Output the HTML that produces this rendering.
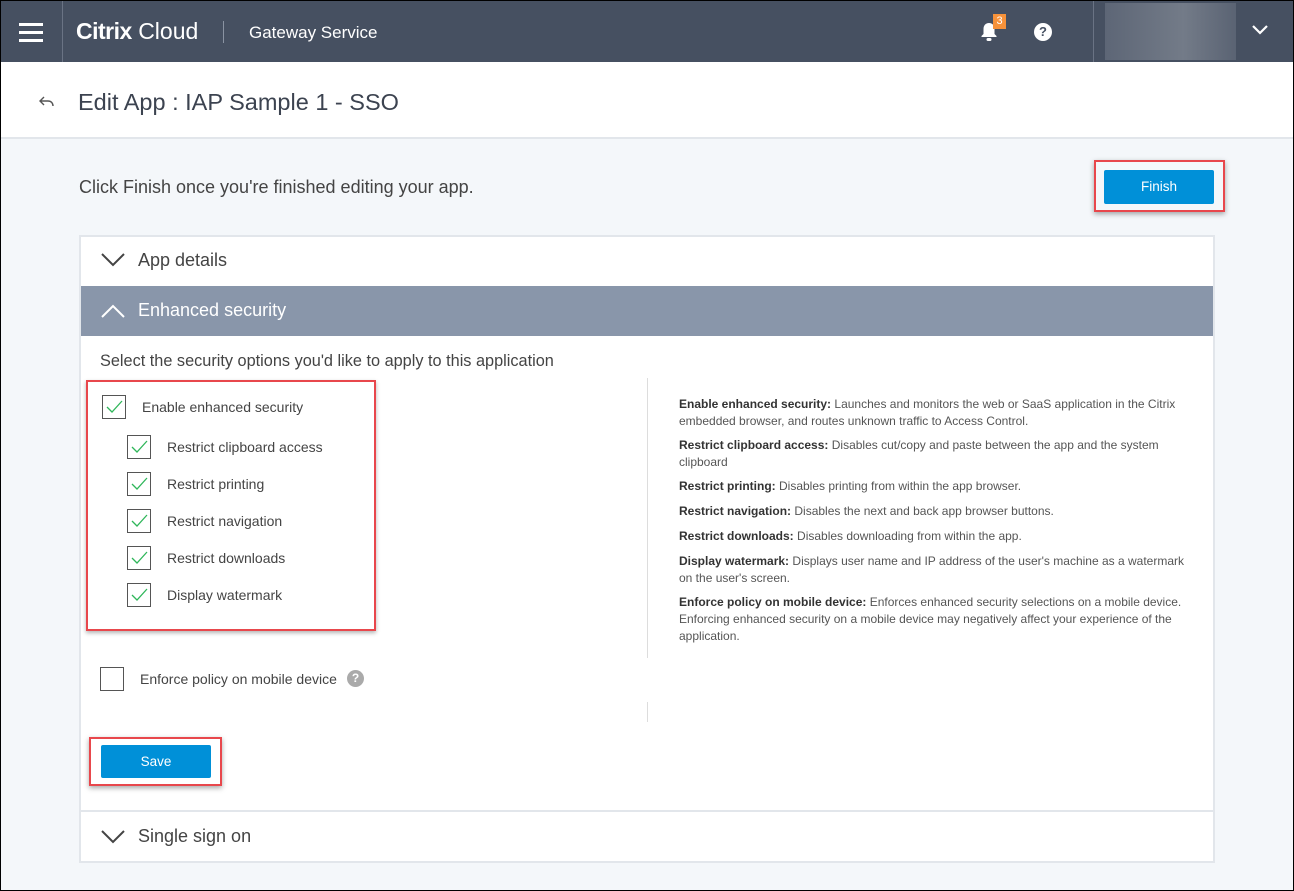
<!DOCTYPE html>
<html><head><style>
*{box-sizing:border-box;margin:0;padding:0}
body{width:1294px;height:891px;position:relative;overflow:hidden;font-family:"Liberation Sans",sans-serif;background:#f4f7fa}
.a{position:absolute}
.hdr{left:0;top:0;width:1294px;height:62px;background:#465061}
.t{color:#fff}
.cb{width:24px;height:24px;border:1px solid #555;background:#fff}
.cb svg{position:absolute;left:3px;top:4px}
.lbl{font-size:14px;color:#444}
.desc{font-size:12px;color:#555;line-height:17px}
.desc b{color:#333;font-weight:bold}
.red{border:2px solid #e8474c;box-shadow:0 2px 5px rgba(0,0,0,.35)}
.btn{background:#0090d8;color:#fff;font-size:13.5px;text-align:center;border-radius:2px}
</style></head><body>
<div class="a hdr"></div>
<div class="a" style="left:19px;top:23px;width:24px;height:3px;background:#fff"></div>
<div class="a" style="left:19px;top:31px;width:24px;height:3px;background:#fff"></div>
<div class="a" style="left:19px;top:39px;width:24px;height:3px;background:#fff"></div>
<div class="a" style="left:62px;top:0;width:1px;height:62px;background:#6a7384"></div>
<div class="a t" style="left:76px;top:18px;font-size:23px"><b style="letter-spacing:-0.5px">Citrix</b> <span style="font-weight:300">Cloud</span></div>
<div class="a" style="left:223px;top:21px;width:1px;height:22px;background:#8a93a2"></div>
<div class="a t" style="left:249px;top:23px;font-size:17px">Gateway Service</div>
<svg class="a" style="left:979px;top:22px" width="20" height="20" viewBox="0 0 20 20"><path d="M10 1c-3.5 0-5.5 2.5-5.5 6v5l-2 2v1h15v-1l-2-2V7c0-3.5-2-6-5.5-6z" fill="#fff"/><rect x="7.5" y="16" width="5" height="3" rx="1.5" fill="#fff"/></svg>
<div class="a" style="left:993px;top:14px;width:13px;height:15px;background:#f7923a;color:#fff;font-size:11px;text-align:center;line-height:15px">3</div>
<div class="a" style="left:1034px;top:23px;width:18px;height:18px;border-radius:50%;background:#fff;color:#465061;font-size:13px;font-weight:bold;text-align:center;line-height:18px">?</div>
<div class="a" style="left:1093px;top:0;width:1px;height:62px;background:#6a7384"></div>
<div class="a" style="left:1105px;top:3px;width:131px;height:57px;background:linear-gradient(90deg,#5d6676,#737b88 60%,#5a6373)"></div>
<svg class="a" style="left:1252px;top:25px" width="16" height="10"><path d="M1 1l7 7 7-7" stroke="#fff" stroke-width="2.2" fill="none"/></svg>
<div class="a" style="left:0;top:62px;width:1294px;height:77px;background:#fff;border-bottom:2px solid #e2e6eb"></div>
<svg class="a" style="left:39px;top:96px" width="16" height="12"><path d="M5 1L1 5l4 4M1 5h8c3 0 5 2 5 5" stroke="#555" stroke-width="1.4" fill="none"/></svg>
<div class="a" style="left:78px;top:89px;font-size:23.5px;color:#3c4350">Edit App : IAP Sample 1 - SSO</div>
<div class="a" style="left:79px;top:177px;font-size:18px;color:#444">Click Finish once you're finished editing your app.</div>
<div class="a red" style="left:1094px;top:160px;width:131px;height:52px"></div>
<div class="a btn" style="left:1104px;top:170px;width:110px;height:34px;line-height:34px">Finish</div>
<div class="a" style="left:79px;top:235px;width:1136px;height:628px;background:#fff;border:2px solid #e2e6eb"></div>
<svg class="a" style="left:101px;top:253px" width="24" height="14"><path d="M1 1l11 11 11-11" stroke="#444" stroke-width="2" fill="none"/></svg>
<div class="a" style="left:138px;top:250px;font-size:18px;color:#444">App details</div>
<div class="a" style="left:81px;top:286px;width:1132px;height:50px;background:#8996aa"></div>
<svg class="a" style="left:101px;top:304px" width="24" height="14"><path d="M1 13L12 2l11 11" stroke="#fff" stroke-width="2" fill="none"/></svg>
<div class="a t" style="left:138px;top:300px;font-size:18px">Enhanced security</div>
<div class="a" style="left:100px;top:352px;font-size:16.3px;color:#444">Select the security options you'd like to apply to this application</div>
<div class="a red" style="left:86px;top:380px;width:290px;height:251px;box-shadow:0 2px 4px rgba(0,0,0,.3)"></div>
<div class="a cb" style="left:102px;top:395px"><svg width="17" height="13"><path d="M1 7l5 5 10-11" stroke="#2fb65a" stroke-width="1.3" fill="none"/></svg></div>
<div class="a lbl" style="left:142px;top:399px">Enable enhanced security</div>
<div class="a cb" style="left:127px;top:435px"><svg width="17" height="13"><path d="M1 7l5 5 10-11" stroke="#2fb65a" stroke-width="1.3" fill="none"/></svg></div>
<div class="a lbl" style="left:167px;top:439px">Restrict clipboard access</div>
<div class="a cb" style="left:127px;top:472px"><svg width="17" height="13"><path d="M1 7l5 5 10-11" stroke="#2fb65a" stroke-width="1.3" fill="none"/></svg></div>
<div class="a lbl" style="left:167px;top:476px">Restrict printing</div>
<div class="a cb" style="left:127px;top:509px"><svg width="17" height="13"><path d="M1 7l5 5 10-11" stroke="#2fb65a" stroke-width="1.3" fill="none"/></svg></div>
<div class="a lbl" style="left:167px;top:513px">Restrict navigation</div>
<div class="a cb" style="left:127px;top:546px"><svg width="17" height="13"><path d="M1 7l5 5 10-11" stroke="#2fb65a" stroke-width="1.3" fill="none"/></svg></div>
<div class="a lbl" style="left:167px;top:550px">Restrict downloads</div>
<div class="a cb" style="left:127px;top:583px"><svg width="17" height="13"><path d="M1 7l5 5 10-11" stroke="#2fb65a" stroke-width="1.3" fill="none"/></svg></div>
<div class="a lbl" style="left:167px;top:587px">Display watermark</div>
<div class="a cb" style="left:100px;top:667px"></div>
<div class="a lbl" style="left:140px;top:671px">Enforce policy on mobile device</div>
<div class="a" style="left:347px;top:670px;width:17px;height:17px;border-radius:50%;background:#aaa;color:#fff;font-size:12px;font-weight:bold;text-align:center;line-height:17px">?</div>
<div class="a" style="left:647px;top:378px;width:1px;height:280px;background:#ddd"></div>
<div class="a" style="left:647px;top:702px;width:1px;height:20px;background:#ddd"></div>
<div class="a desc" style="left:679px;top:396px;width:505px">
<p style="margin-bottom:7px"><b>Enable enhanced security:</b> Launches and monitors the web or SaaS application in the Citrix embedded browser, and routes unknown traffic to Access Control.</p>
<p style="margin-bottom:7px"><b>Restrict clipboard access:</b> Disables cut/copy and paste between the app and the system clipboard</p>
<p style="margin-bottom:8px"><b>Restrict printing:</b> Disables printing from within the app browser.</p>
<p style="margin-bottom:8px"><b>Restrict navigation:</b> Disables the next and back app browser buttons.</p>
<p style="margin-bottom:8px"><b>Restrict downloads:</b> Disables downloading from within the app.</p>
<p style="margin-bottom:7px"><b>Display watermark:</b> Displays user name and IP address of the user's machine as a watermark on the user's screen.</p>
<p><b>Enforce policy on mobile device:</b> Enforces enhanced security selections on a mobile device. Enforcing enhanced security on a mobile device may negatively affect your experience of the application.</p>
</div>
<div class="a red" style="left:89px;top:737px;width:133px;height:49px"></div>
<div class="a btn" style="left:101px;top:745px;width:110px;height:33px;line-height:33px">Save</div>
<div class="a" style="left:81px;top:810px;width:1132px;height:2px;background:#e2e6eb"></div>
<svg class="a" style="left:101px;top:830px" width="24" height="14"><path d="M1 1l11 11 11-11" stroke="#444" stroke-width="2" fill="none"/></svg>
<div class="a" style="left:138px;top:826px;font-size:18px;color:#444">Single sign on</div>
<div class="a" style="left:0;top:0;width:1294px;height:891px;border:1px solid #000;pointer-events:none"></div>
</body></html>
